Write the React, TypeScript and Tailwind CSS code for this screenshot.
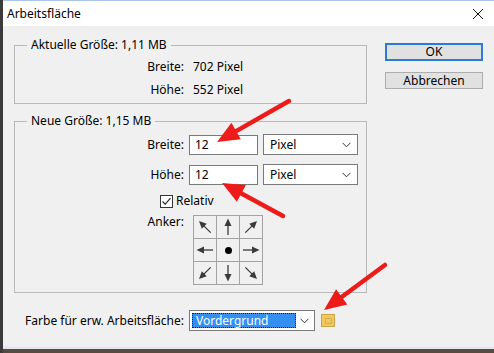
import { useState } from "react";

// red annotation arrows drawn over the dialog
function RedArrow({ x1, y1, x2, y2 }: { x1: number; y1: number; x2: number; y2: number }) {
    const dx = x2 - x1
    const dy = y2 - y1
    const len = Math.hypot(dx, dy)
    const ux = dx / len
    const uy = dy / len
    const L = 22
    const W = 19
    const bx = x2 - ux * L
    const by = y2 - uy * L
    const px = -uy
    const py = ux
    const pts = `${x2},${y2} ${bx + (px * W) / 2},${by + (py * W) / 2} ${bx - (px * W) / 2},${by - (py * W) / 2}`
    return (
        <g>
            <line x1={x1} y1={y1} x2={bx + ux * 3} y2={by + uy * 3} stroke="#ee1b1b" strokeWidth={4.5} strokeLinecap="round" />
            <polygon points={pts} fill="#ee1b1b" />
        </g>
    )
}

function Chevron() {
    return (
        <svg width="9" height="6" viewBox="0 0 9 6">
            <path d="M0.5 0.8 L4.5 4.8 L8.5 0.8" fill="none" stroke="#333" strokeWidth="1" />
        </svg>
    )
}

// anchor cell arrow, rotated by deg (0 = up)
function AnchorArrow({ deg }: { deg: number }) {
    return (
        <svg width="22" height="22" viewBox="0 0 22 22">
            <g transform={`rotate(${deg} 11 11)`}>
                <line x1="11" y1="19" x2="11" y2="9" stroke="#3a3a3a" strokeWidth="1.3" />
                <polygon points="11,2.5 7.5,10 14.5,10" fill="#3a3a3a" />
            </g>
        </svg>
    )
}

function Group({ title, children, className }: { title: string; children: React.ReactNode; className?: string }) {
    return (
        <div className={"border border-[#b9b9b9] " + (className ?? "")}>
            <div className="-mt-[9px] ml-[12px] w-fit px-[4px] h-[16px] leading-[16px] bg-[#f0f0f0]">{title}</div>
            {children}
        </div>
    )
}

export default function App() {
    const [relativ, setRelativ] = useState(true)
    const anchors: (number | null)[] = [-45, 0, 45, -90, null, 90, -135, 180, 135]

    return (
        <div className="w-[494px] h-[353px] relative overflow-hidden flex bg-[#4d4237] font-['Noto_Sans',sans-serif] text-[12px] text-black">
            <div className="w-[3px] bg-[#3b3b3b]" />
            <div className="flex-1 flex flex-col">
                {/* title bar */}
                <div className="h-[26px] bg-white border-t border-[#a9c6ea] flex items-center justify-between pl-[4px] pr-[10px]">
                    <span>Arbeitsfläche</span>
                    <svg width="12" height="12" viewBox="0 0 12 12">
                        <path d="M1 1 L11 11 M11 1 L1 11" stroke="#111" strokeWidth="1" />
                    </svg>
                </div>

                {/* body */}
                <div className="h-[319px] bg-[#f0f0f0] flex pl-[11px] pt-[19px]">
                    <div className="w-[353px] flex flex-col">
                        <Group title="Aktuelle Größe: 1,11 MB" className="pb-[2px]">
                            <div className="mt-[2px] flex h-[23px] items-center">
                                <span className="w-[169px] text-right">Breite:</span>
                                <span className="ml-[9px]">702 Pixel</span>
                            </div>
                            <div className="flex h-[23px] items-center">
                                <span className="w-[169px] text-right">Höhe:</span>
                                <span className="ml-[9px]">552 Pixel</span>
                            </div>
                        </Group>

                        <Group title="Neue Größe: 1,15 MB" className="mt-[17px] pb-[7px]">
                            <div className="mt-[5px] flex h-[21px] items-center">
                                <span className="w-[169px] text-right">Breite:</span>
                                <div className="ml-[5px] w-[69px] h-[20px] bg-white border border-[#7a7a7a] flex items-center pl-[5px]">12</div>
                                <div className="ml-[5px] w-[95px] h-[21px] bg-white border border-[#7a7a7a] flex items-center justify-between pl-[6px] pr-[6px]">
                                    <span>Pixel</span>
                                    <Chevron />
                                </div>
                            </div>
                            <div className="mt-[9px] flex h-[21px] items-center">
                                <span className="w-[169px] text-right">Höhe:</span>
                                <div className="ml-[5px] w-[69px] h-[20px] bg-white border border-[#7a7a7a] flex items-center pl-[5px]">12</div>
                                <div className="ml-[5px] w-[95px] h-[21px] bg-white border border-[#7a7a7a] flex items-center justify-between pl-[6px] pr-[6px]">
                                    <span>Pixel</span>
                                    <Chevron />
                                </div>
                            </div>
                            <div className="mt-[8px] flex h-[16px] items-center ml-[145px]">
                                <button
                                    type="button"
                                    onClick={() => setRelativ(!relativ)}
                                    className="w-[13px] h-[13px] bg-white border border-[#333] flex items-center justify-center"
                                >
                                    {relativ && (
                                        <svg width="11" height="11" viewBox="0 0 11 11">
                                            <path d="M1.5 5.5 L4.2 8.2 L9.5 2.2" fill="none" stroke="#222" strokeWidth="1.1" />
                                        </svg>
                                    )}
                                </button>
                                <span className="ml-[3px]">Relativ</span>
                            </div>
                            <div className="mt-[6px] flex items-start">
                                <span className="w-[169px] text-right leading-[16px] -mt-[1px]">Anker:</span>
                                <div className="ml-[9px] grid grid-cols-[repeat(3,22px)] grid-rows-[repeat(3,22px)] gap-px p-px bg-[#a3a3a3]">
                                    {anchors.map((a, i) => (
                                        <div key={i} className="bg-[#f0f0f0] flex items-center justify-center">
                                            {a === null ? <div className="w-[7px] h-[7px] rounded-full bg-black" /> : <AnchorArrow deg={a} />}
                                        </div>
                                    ))}
                                </div>
                            </div>
                        </Group>

                        <div className="mt-[17px] flex h-[21px] items-center">
                            <span className="w-[170px] text-right">Farbe für erw. Arbeitsfläche:</span>
                            <div className="ml-[5px] w-[126px] h-[21px] bg-white border border-[#7a7a7a] flex items-center pl-[2px] pr-[5px]">
                                <div className="w-[104px] h-[15px] bg-[#3390f0] border border-dotted border-[#1a1a1a] text-white flex items-center pl-[3px]">
                                    Vordergrund
                                </div>
                                <div className="ml-auto">
                                    <Chevron />
                                </div>
                            </div>
                            <div className="ml-[6px] w-[14px] h-[13px] bg-[#f1c75e] border border-[#c9a54c] flex items-center justify-center">
                                <div className="w-[7px] h-[6px] border border-[#d9ad50]" />
                            </div>
                        </div>
                    </div>

                    <div className="ml-[18px] -mt-[2px] flex flex-col">
                        <button type="button" className="w-[98px] h-[18px] bg-[#e1e1e1] border-2 border-[#2a7bd1] flex items-center justify-center">
                            OK
                        </button>
                        <button type="button" className="mt-[11px] w-[98px] h-[17px] bg-[#e1e1e1] border border-[#adadad] flex items-center justify-center">
                            Abbrechen
                        </button>
                    </div>
                </div>

                <div className="h-[2px] bg-[#f3e9ee]" />
                <div className="h-[2px] bg-[#dde8f5]" />
                <div className="flex-1 bg-[#5a4a3d]" />
            </div>

            <svg className="absolute inset-0 pointer-events-none" width="494" height="353">
                <RedArrow x1={289} y1={101} x2={217} y2={142} />
                <RedArrow x1={283} y1={216} x2={222} y2={183} />
                <RedArrow x1={385} y1={265} x2={324} y2={310} />
            </svg>
        </div>
    )
}
